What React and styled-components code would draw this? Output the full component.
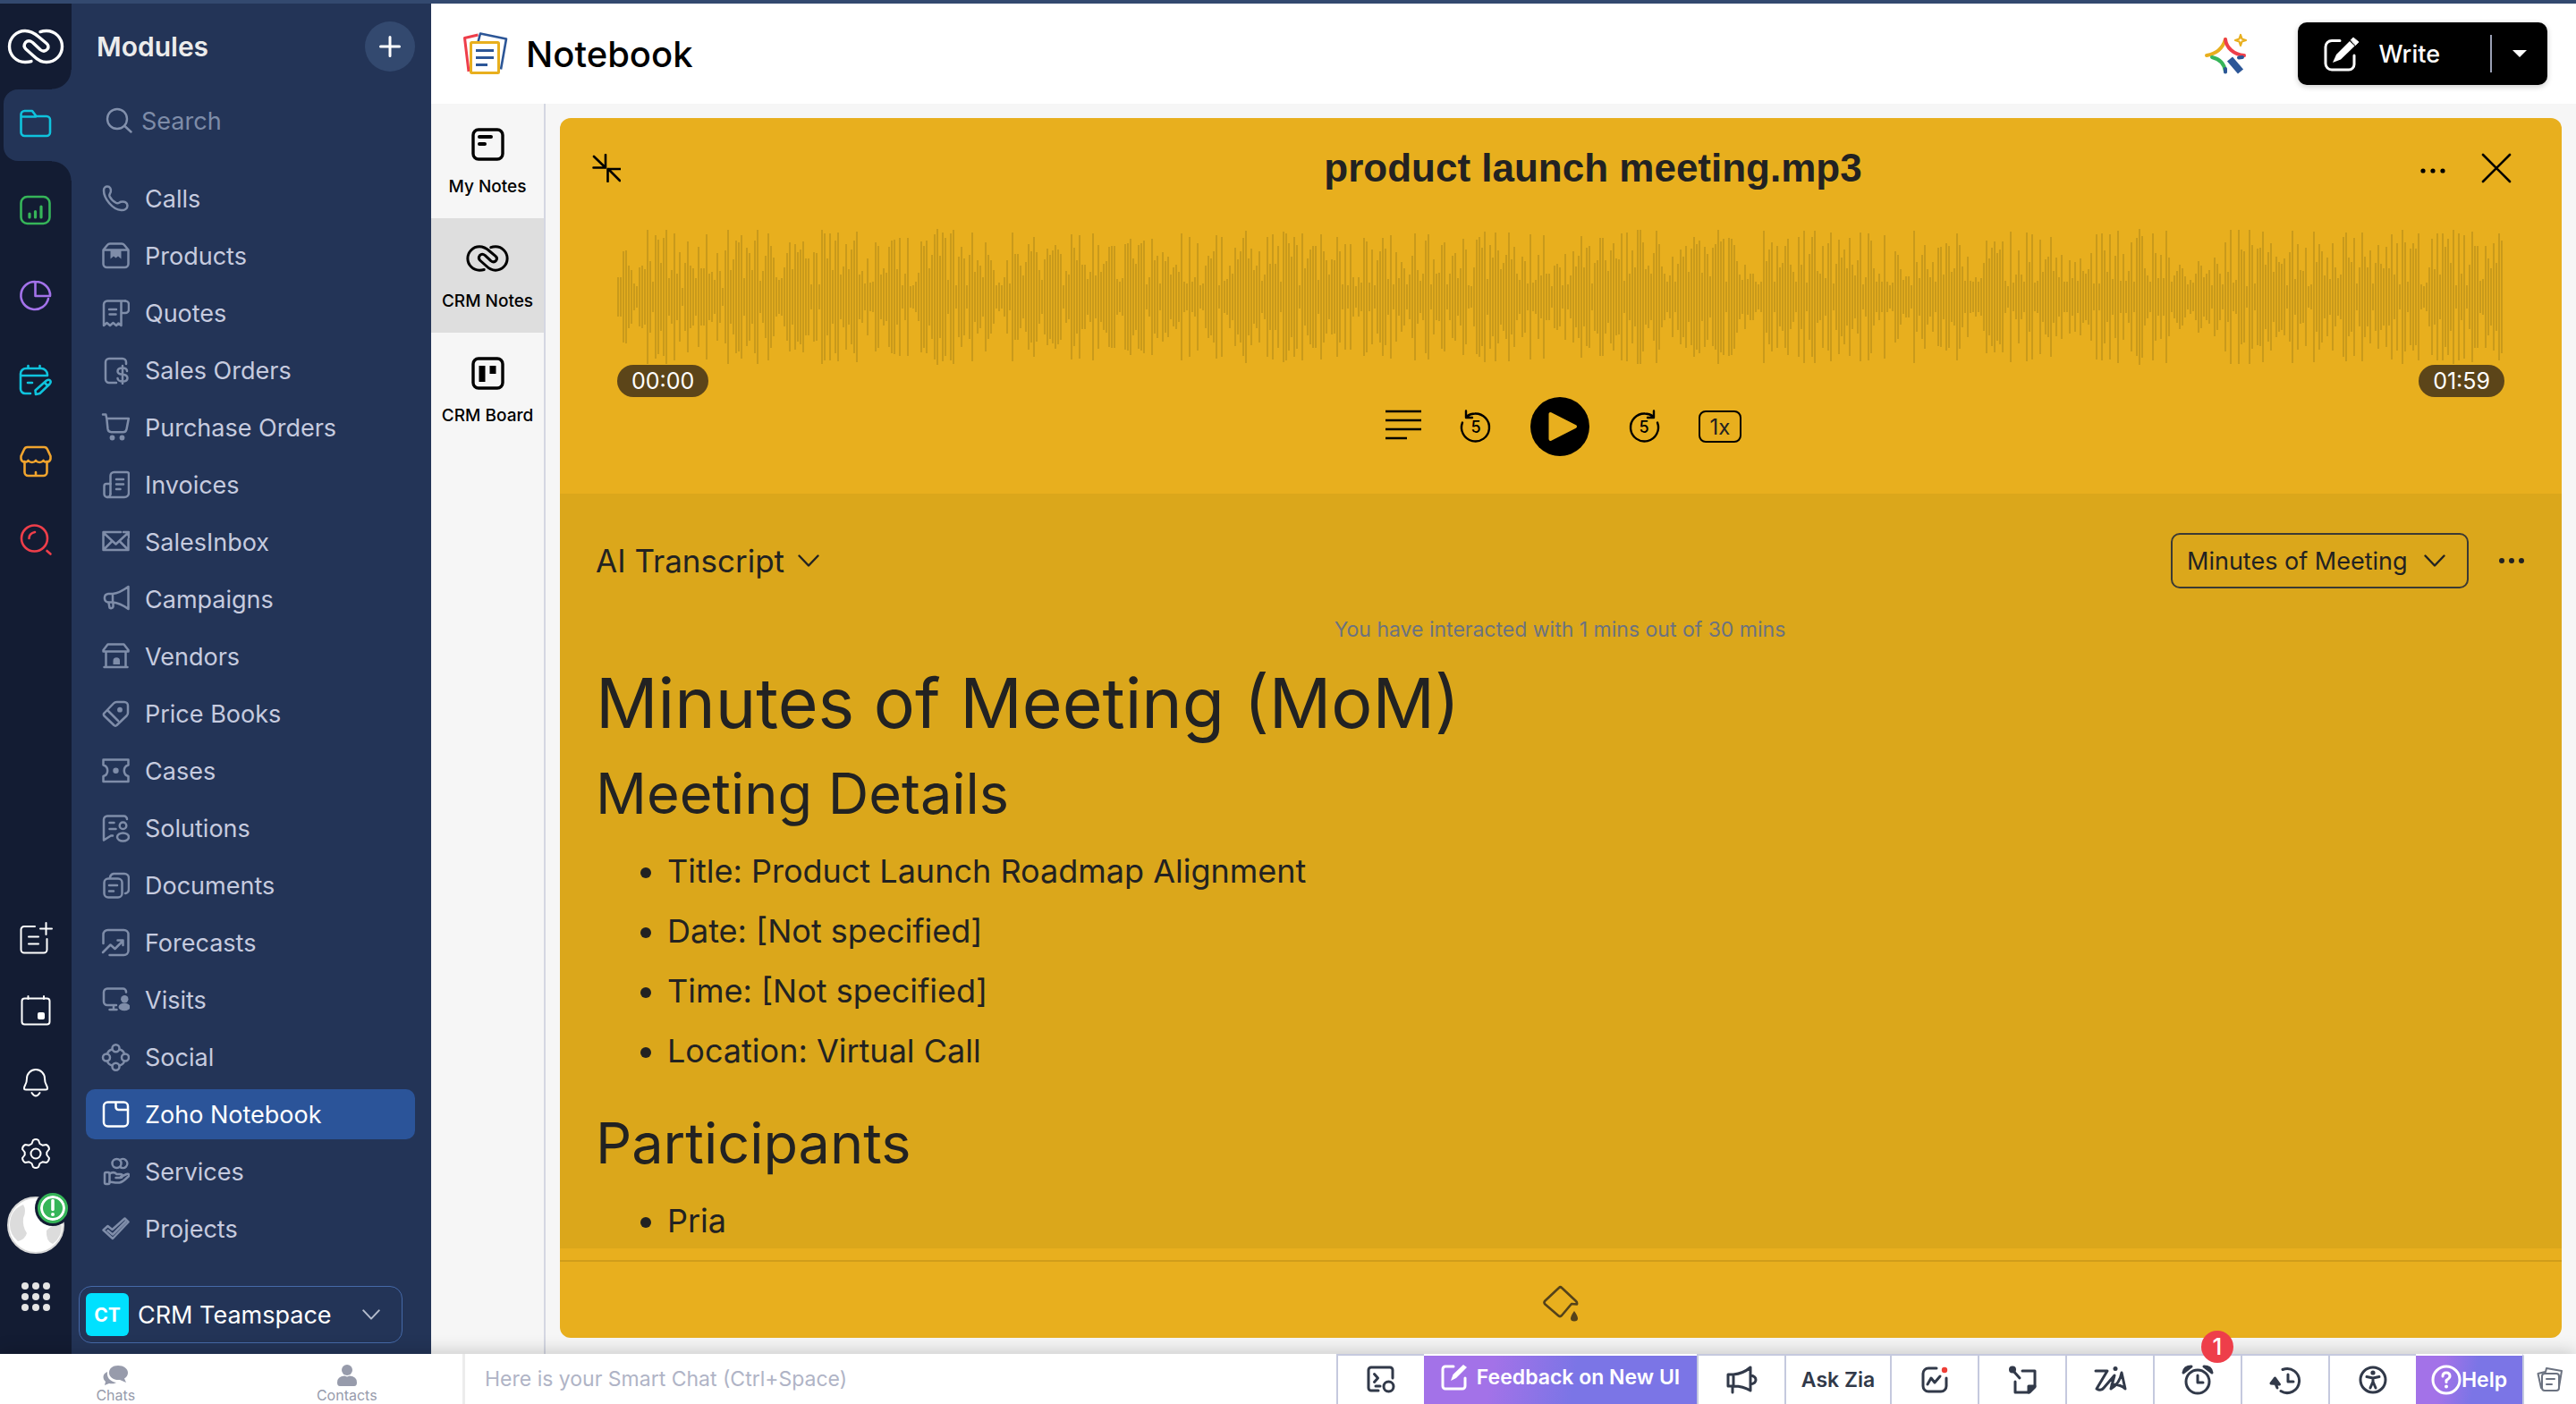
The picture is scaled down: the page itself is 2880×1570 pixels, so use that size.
import React from "react";
import styled, { createGlobalStyle } from "styled-components";

/* ---------- icons ---------- */

const Icon = ({ size = 32, box = size, stroke = 2.5, children, ...rest }) => (
  <svg
    width={size}
    height={size}
    viewBox={`0 0 ${box} ${box}`}
    fill="none"
    stroke="currentColor"
    strokeWidth={stroke}
    strokeLinecap="round"
    strokeLinejoin="round"
    aria-hidden="true"
    {...rest}
  >
    {children}
  </svg>
);

const Dot = (props) => <circle fill="currentColor" stroke="none" {...props} />;

const LinkLogo = ({ width = 64, height = 44, stroke = 3.4 }) => (
  <svg
    width={width}
    height={height}
    viewBox="0 0 64 44"
    fill="none"
    stroke="currentColor"
    strokeWidth={stroke}
    strokeLinecap="round"
    strokeLinejoin="round"
    aria-hidden="true"
  >
    <path d="M27 38.6Q24 39.5 20 39.500A17.500 17.500 0 0 1 20 4.500C27 4.500 31 7.500 35 11L44 18.500Q47.500 21.500 45 25Q41.500 29 37 25.500L28.500 17.500Q24 14 20.500 17.500Q17.500 21.500 21 25L30 33C34 37 38 39.500 44 39.500A17.500 17.500 0 0 0 44 4.500Q40 4.500 37 5.600" />
  </svg>
);

const Chevron = ({ width = 24, stroke = 2.4 }) => (
  <svg
    width={width}
    height={width}
    viewBox="0 0 24 24"
    fill="none"
    stroke="currentColor"
    strokeWidth={stroke}
    strokeLinecap="round"
    strokeLinejoin="round"
    aria-hidden="true"
  >
    <path d="M1.500 6.500L12 17.500L22.500 6.500" />
  </svg>
);

const moduleIcons = {
  calls: (
    <path d="M3 7c0-3 2-4.500 4-4.500 3 0 4.500 3 3.800 6-.5 2-2.300 3-1.300 5 1.500 3 4.500 6 7.500 7.500 2 1 3.300-.6 5-1.200 4-1.200 7.500.8 7.500 4.200 0 3.500-3.500 5.300-7 5C13 28.500 3 16 3 7z" />
  ),
  products: (
    <>
      <path d="M2.500 9.500v15.500a4 4 0 0 0 4 4h20a4 4 0 0 0 4-4V9.500l-4.500-5.500a4 4 0 0 0-3-1.500H10a4 4 0 0 0-3 1.500z M3 9.500h27" />
      <path d="M10.500 10h12v9.500l-3.500-3-2.500 2-2.500-2-3.500 3z" fill="currentColor" stroke="none" />
    </>
  ),
  quotes: (
    <>
      <path d="M27 2.500H7a4 4 0 0 0-4 4V30l3.500-3 3.500 3 3.500-3 3.500 3 2.500-2.500 3 2.500V2.500" />
      <path d="M23 16h4a4 4 0 0 0 4-4V6.500a4 4 0 0 0-4-4M9 12h8M9.500 17.500h7" />
    </>
  ),
  salesOrders: (
    <>
      <path d="M28 9V7a4 4 0 0 0-4-4H9a4 4 0 0 0-4 4v19a4 4 0 0 0 4 4h8" />
      <path d="M29 17c0-2-2-3.500-5-3.500s-5.500 1-5.500 3.700 2.500 3.300 5.500 3.600 5.500 1.200 5.500 3.900-2.500 3.800-5.500 3.800-5.500-1.500-5.500-3.500M24 11v20" />
    </>
  ),
  cart: (
    <>
      <path d="M2 1.500h3.300l1 4.500h24.500l-2.300 12a4 4 0 0 1-4 3.200H11.500a4 4 0 0 1-4-3.500L6.300 6" />
      <Dot cx="12.500" cy="27.500" r="2.900" />
      <Dot cx="23.500" cy="27.500" r="2.900" />
    </>
  ),
  invoices: (
    <>
      <path d="M10.500 26V6a4 4 0 0 1 4-4H29a2 2 0 0 1 2 2v21a5 5 0 0 1-5 5H7" />
      <path d="M10.500 15H6a2.500 2.500 0 0 0-2.500 2.500v9a3.500 3.500 0 0 0 7 0M17 10h8M17 15.500h8M17 21h4.500" />
    </>
  ),
  inbox: (
    <path d="M22 5H2.500v20h28V13M3 6l13.500 12.500L29.500 6.500M25 5h6v6M3.500 24l8.500-8.500M29.500 24L21 15.500" />
  ),
  campaigns: (
    <>
      <path d="M13 10C19 9.500 25 6 30.500 2v25C25 23 19 20 13 19.500zM13 10H8a4.800 4.800 0 0 0 0 9.500h5" />
      <path d="M8.500 20l1 5.500a2.500 2.500 0 0 0 4-1V20" />
    </>
  ),
  vendors: (
    <>
      <path d="M7.500 2.500h18L30.500 9v1.500h-28V9zM5.500 10.500V28h22V10.500M3.500 28h26" />
      <path d="M13.500 25v-4a3.500 3.500 0 0 1 7.500 0v4z" fill="currentColor" stroke="none" />
    </>
  ),
  priceBooks: (
    <>
      <path d="M3.500 15.500L14 4.500A5 5 0 0 1 17.500 3H26a4 4 0 0 1 4 4v8a5 5 0 0 1-1.500 3.500L17.500 29a2 2 0 0 1-3 0L3.500 18.500a2 2 0 0 1 0-3zM8 13l11 11" />
      <Dot cx="21" cy="11.700" r="2.900" />
    </>
  ),
  cases: (
    <>
      <path d="M2.500 3.500h28v6a6.500 6.500 0 0 0 0 12.500v6h-28v-6a6.500 6.500 0 0 0 0-12.500z" />
      <Dot cx="16.500" cy="15.700" r="3.200" />
    </>
  ),
  solutions: (
    <>
      <path d="M29 6a3.500 3.500 0 0 0-3.500-3.500H7a4 4 0 0 0-4 4v23L11 24.500h2M9.500 10h5M9.500 17h7" />
      <circle cx="24.500" cy="13.300" r="3.800" />
      <ellipse cx="24.500" cy="26" rx="6.500" ry="4.500" />
    </>
  ),
  documents: (
    <>
      <path d="M10 7a5 5 0 0 1 4-4h12a5 5 0 0 1 5 5v12a5 5 0 0 1-4 5" />
      <rect x="3.500" y="8.500" width="20" height="21" rx="4.500" />
      <path d="M9 16h9M9 22.500h5" />
    </>
  ),
  forecasts: (
    <path d="M2.500 17V7a5 5 0 0 1 5-5h18a5 5 0 0 1 5 5v18a5 5 0 0 1-5 5h-16M2 27l8.500-8.500 5 4.500 8.500-8.500M18.500 13.500h6v5.500" />
  ),
  visits: (
    <>
      <path d="M28 7.500v-.5a3.500 3.500 0 0 0-3.500-3.500H7a4 4 0 0 0-4 4V18a4 4 0 0 0 4 4h10M14 22v5M9.500 27h8" />
      <Dot cx="26.300" cy="15.300" r="4.200" />
      <ellipse cx="26" cy="24" rx="6.500" ry="4.300" fill="currentColor" stroke="none" />
    </>
  ),
  social: (
    <>
      <circle cx="16.500" cy="6.300" r="4" />
      <circle cx="6" cy="16.500" r="4" />
      <circle cx="27" cy="16.500" r="4" />
      <circle cx="16.500" cy="26.700" r="4" />
      <path d="M12.500 7.500Q8 8.500 7 12.500M20.500 7.500Q25 8.500 26 12.500M7 20.500Q8 24.500 12.500 25.500M26 20.500Q25 24.500 20.500 25.500" />
    </>
  ),
  notebook: (
    <>
      <rect x="3" y="2.500" width="27" height="27" rx="4.500" />
      <path d="M16.500 3v5a3 3 0 0 0 3 3H30" />
    </>
  ),
  services: (
    <>
      <circle cx="17.500" cy="7" r="5" />
      <path d="M21 3.300a5 5 0 1 1 0 7.500" />
      <rect x="4" y="17" width="5.500" height="13" rx="1.500" />
      <path d="M9.500 18.500c3-2 6-1.500 8 .5h4c3 0 3 4 0 4h-5M22 22l6.500-3c3-.8 3.500 1.500 1.500 3-3 3-6 6-9.500 6.500-4 .5-7-.5-11-1" />
    </>
  ),
  projects: (
    <>
      <path d="M2.500 17.500l5-4.500 5 4L26.500 4.500l4 4L13 27z" />
      <path d="M7.500 18l5.500 4.500L27.500 8" />
    </>
  ),
};

const NotebookLogo = () => (
  <Icon size={52} stroke={3} strokeLinecap="butt">
    <path d="M8 46L3.500 8.500l15-3.500" stroke="#ee3e4a" />
    <path d="M18.500 13L21 3.500 50 9.500 44 43.500" stroke="#2c5697" strokeWidth="2.600" />
    <rect x="10.500" y="13.500" width="31" height="34" rx="1" stroke="#e8af1e" fill="#fff" />
    <path d="M16 22.500h20M16 30.500h20M16 38.500h13" stroke="#2c5697" />
  </Icon>
);

const SparkleLogo = () => (
  <Icon size={52} stroke={4}>
    <path d="M4 28C16 26 22 20 25 10" stroke="#e8af1e" />
    <path d="M25 10c1 9 9 17 21 18" stroke="#ee3e4a" />
    <path d="M10 30c9 2 14 8 15 16" stroke="#36b559" />
    <path d="M25 43v3.500M44 30l-4 .5" stroke="#2c5697" />
    <path d="M30 32L42 46" stroke="#2c5697" strokeWidth="8" strokeLinecap="butt" />
    <path
      d="M42 5l1.500 4.500 4.500 1.500-4.500 1.500-1.500 4.500-1.500-4.500-4.500-1.500 4.500-1.500z"
      stroke="#e8af1e"
      strokeWidth="2.200"
    />
  </Icon>
);

const Seek = ({ flip }) => (
  <Icon size={40} stroke={2.400}>
    <g transform={flip ? "translate(40 0) scale(-1 1)" : undefined}>
      <path d="M5 15.500A15.500 15.500 0 1 0 19 5.500q-5 0-9 3M9 2.500v7.500h7" />
    </g>
    <text
      x="20"
      y="27"
      textAnchor="middle"
      fill="currentColor"
      stroke="none"
      fontSize="18"
      fontWeight="500"
    >
      5
    </text>
  </Icon>
);

/* ---------- data ---------- */

const railTop = [
  {
    label: "Modules",
    color: "#0fc3dd",
    size: 80,
    active: true,
    icon: (
      <path d="M2.500 27V7a4 4 0 0 1 4-4H15l4.500 6H31a4 4 0 0 1 4 4v14a4 4 0 0 1-4 4H6.500a4 4 0 0 1-4-4M2.500 9.500H19" />
    ),
  },
  {
    label: "Reports",
    color: "#36b559",
    size: 96,
    icon: (
      <>
        <rect x="2.500" y="3" width="32" height="30" rx="7" />
        <path d="M12 22v4M18.500 19.500v6.500M25 14v12" strokeWidth="3.200" />
      </>
    ),
  },
  {
    label: "Analytics",
    color: "#a372ea",
    size: 96,
    icon: <path d="M18.500 3v15h16.500A16.500 15 0 0 0 18.500 2A15.500 15.500 0 1 0 33 21" />,
  },
  {
    label: "Requests",
    color: "#0fc3dd",
    size: 92,
    icon: (
      <path d="M13 33H7a5 5 0 0 1-5-5V11a6 6 0 0 1 6-6h17a7 7 0 0 1 7 7v1H3M10.500 2v3M23.500 2v3M10 21h5M19 34l-.5-4.500L31 18.500q2.500-1.500 4 0t-.5 4L23.500 33zM29 21l3 3" />
    ),
  },
  {
    label: "Marketplace",
    color: "#f0a42e",
    size: 88,
    icon: (
      <path d="M6.500 19v12a4 4 0 0 0 4 4h17a4 4 0 0 0 4-4V19M2.500 13L6 5.500a4 4 0 0 1 4-2.500h18a4 4 0 0 1 4 2.500l3.500 7.500v3a4.500 4.500 0 0 1-8 2 5.500 5.500 0 0 1-8.500 0 5.500 5.500 0 0 1-8.500 0 4.500 4.500 0 0 1-8-2zM19 31v4" />
    ),
  },
  {
    label: "Zia Search",
    color: "#ee3e4a",
    size: 88,
    icon: <path d="M17.500 2.500a14.500 14.500 0 1 1 0 29 14.500 14.500 0 1 1 0-29zM11.500 17q0-5.500 6.500-7M31.500 31l4 3.500" />,
  },
];

const railBottom = [
  {
    label: "Quick create",
    icon: <path d="M18 5H6a3.500 3.500 0 0 0-3.500 3.500V31A3.500 3.500 0 0 0 6 34.500h22a3.500 3.500 0 0 0 3.500-3.500V19M11 16.500h11M11 24.500h11M30.500 1v13M24 7.500h13" />,
  },
  {
    label: "Calendar",
    icon: (
      <>
        <rect x="3.500" y="5.500" width="31" height="29" rx="3" />
        <path d="M10.500 3v3M28 3v3" />
        <rect x="21" y="21" width="8" height="8" rx="2" fill="currentColor" stroke="none" />
      </>
    ),
  },
  {
    label: "Notifications",
    icon: <path d="M9 15a10 10 0 0 1 20 0c0 7 3 7 3 11q0 1.500-2 1.500H8Q6 27.500 6 26c0-4 3-4 3-11zM14.500 31q4.500 7 9 0" />,
  },
  {
    label: "Setup",
    icon: (
      <>
        <path d="M16 4q3-2 6 0l1.500 4 3 1.700 4.200-.7q3 1.300 3.300 5l-2.700 3.500v3l2.700 3.500q-.3 3.700-3.300 5l-4.200-.7-3 1.700L22 34q-3 2-6 0l-1.500-4-3-1.700-4.200.7q-3-1.300-3.300-5L6.700 20.500v-3L4 14q.3-3.700 3.300-5l4.200.7 3-1.700z" />
        <circle cx="19" cy="19" r="5.500" />
      </>
    ),
  },
];

const modules = [
  ["Calls", "calls"],
  ["Products", "products"],
  ["Quotes", "quotes"],
  ["Sales Orders", "salesOrders"],
  ["Purchase Orders", "cart"],
  ["Invoices", "invoices"],
  ["SalesInbox", "inbox"],
  ["Campaigns", "campaigns"],
  ["Vendors", "vendors"],
  ["Price Books", "priceBooks"],
  ["Cases", "cases"],
  ["Solutions", "solutions"],
  ["Documents", "documents"],
  ["Forecasts", "forecasts"],
  ["Visits", "visits"],
  ["Social", "social"],
  ["Zoho Notebook", "notebook"],
  ["Services", "services"],
  ["Projects", "projects"],
];

const details = [
  "Title: Product Launch Roadmap Alignment",
  "Date: [Not specified]",
  "Time: [Not specified]",
  "Location: Virtual Call",
];

const opening = [
  22, 22, 51, 52, 35, 30, 15, 12, 33, 35, 31, 75, 40, 17, 69, 64, 38, 66, 75, 21, 30, 71, 26, 50,
  10, 38, 62, 35, 32, 21, 56, 32, 32, 70, 26, 28, 19, 49, 29, 10, 52, 75, 30, 42, 63, 61, 69, 21,
  55, 49, 30, 63, 75, 18, 29, 46, 71, 57, 44, 22, 19, 21, 33, 49, 61, 31, 59, 50, 53, 62, 43, 43,
];

// small seeded generator, so the wave form is the same on every render
const makeWave = (count) => {
  let seed = 7919;
  const next = () => {
    seed = (seed * 16807) % 2147483647;
    return seed / 2147483647;
  };
  const bars = [...opening];
  while (bars.length < count) {
    bars.push(Math.round(12 + Math.pow(next(), 1.2) * 64));
  }
  return bars;
};

const wavePath = makeWave(703)
  .map((h, i) => `M${i * 3 + 1} ${76 - h}V${76 + h}`)
  .join("");

/* ---------- page ---------- */

const App = () => {
  return (
    <Page>
      <GlobalStyle />
      <TopStrip />
      <Body>
        <Rail>
          <LogoLink href="#home" aria-label="Home">
            <LinkLogo />
          </LogoLink>
          <RailTop>
            {railTop.map((item) => (
              <RailItem
                key={item.label}
                href="#rail"
                aria-label={item.label}
                $size={item.size}
                $color={item.color}
                $active={item.active}
              >
                <Icon size={38} stroke={2.600}>{item.icon}</Icon>
              </RailItem>
            ))}
          </RailTop>
          <RailBottom>
            {railBottom.map((item) => (
              <RailItem key={item.label} href="#rail" aria-label={item.label} $size={80} $color="#fff">
                <Icon size={38} stroke={2}>{item.icon}</Icon>
              </RailItem>
            ))}
            <RailItem href="#profile" aria-label="Profile" $size={80} $color="#fff">
              <Avatar>
                <svg width="64" height="64" viewBox="0 0 64 64" aria-hidden="true">
                  <circle cx="32" cy="32" r="31" fill="#fff" stroke="#d8d8d8" strokeWidth="2" />
                  <path d="M3 32Q3 15 18 9Q22 16 18 24Q17 34 22 41Q20 48 12 50Q3 42 3 32zM44 38Q52 30 61 32Q61 46 51 53Q43 50 44 38z" fill="#dcdcdc" />
                </svg>
                <AvatarBadge>
                  <svg width="28" height="28" viewBox="0 0 28 28" aria-hidden="true">
                    <path d="M14 5.500v10" stroke="#fff" strokeWidth="3.600" strokeLinecap="round" />
                    <circle cx="14" cy="21" r="2" fill="#fff" />
                  </svg>
                </AvatarBadge>
              </Avatar>
            </RailItem>
            <RailItem href="#apps" aria-label="All apps" $size={80} $color="#e4e4e4">
              <Icon size={38}>
                {[7, 19, 31].map((y) => [7, 19, 31].map((x) => <Dot key={`${x}-${y}`} cx={x} cy={y} r="4" />))}
              </Icon>
            </RailItem>
          </RailBottom>
        </Rail>

        <Sidebar>
          <SidebarHeader>
            <SidebarTitle>Modules</SidebarTitle>
            <AddButton aria-label="Add module">
              <Icon size={24} stroke={3}>
                <path d="M12 1.500v21M1.500 12h21" />
              </Icon>
            </AddButton>
          </SidebarHeader>
          <SearchBox>
            <Icon size={30} stroke={2.400}>
              <circle cx="13" cy="13" r="11" />
              <path d="M21.500 21l7 6.500" />
            </Icon>
            <input type="search" placeholder="Search" aria-label="Search modules" />
          </SearchBox>
          <ModuleList>
            {modules.map(([label, icon]) => (
              <ModuleLink key={label} href="#module" $active={label === "Zoho Notebook"}>
                <Icon>{moduleIcons[icon]}</Icon>
                {label}
              </ModuleLink>
            ))}
          </ModuleList>
          <Teamspace>
            <TeamBadge>CT</TeamBadge>
            <select aria-label="Teamspace">
              <option>CRM Teamspace</option>
            </select>
            <Chevron width={20} />
          </Teamspace>
        </Sidebar>

        <Main>
          <Header>
            <NotebookLogo />
            <HeaderTitle>Notebook</HeaderTitle>
            <IconButton aria-label="Zia">
              <SparkleLogo />
            </IconButton>
            <WriteGroup>
              <WriteButton>
                <Icon size={42} stroke={3}>
                  <path d="M19 6.500H10a7 7 0 0 0-7 7V32a7 7 0 0 0 7 7h19a6 6 0 0 0 6-6V23" />
                  <path d="M11 31l4-9L30 7l5.500 5.500L20 27.500z" fill="currentColor" stroke="none" />
                  <path d="M31.500 5.500L34 3l6 5-3.500 3.500z" fill="currentColor" strokeWidth="1" />
                </Icon>
                Write
              </WriteButton>
              <WriteMore aria-label="More write options">
                <svg width="16" height="8" viewBox="0 0 16 8" aria-hidden="true">
                  <path d="M0 0h16L8 8z" fill="#fff" />
                </svg>
              </WriteMore>
            </WriteGroup>
          </Header>

          <Workspace>
            <Tabs>
              <TabLink href="#my-notes">
                <Icon size={48} stroke={3.400}>
                  <rect x="8" y="8" width="33" height="33" rx="6" />
                  <path d="M15 16h13M15 24h6" strokeWidth="4" />
                </Icon>
                My Notes
              </TabLink>
              <TabLink href="#crm-notes" $active>
                <LinkLogo width={48} height={48} stroke={4} />
                CRM Notes
              </TabLink>
              <TabLink href="#crm-board">
                <Icon size={48} stroke={3.400}>
                  <rect x="8" y="8" width="33" height="33" rx="6" />
                  <path d="M18 16v18" strokeWidth="7" strokeLinecap="butt" />
                  <path d="M30 16v9" strokeWidth="7" strokeLinecap="butt" />
                </Icon>
                CRM Board
              </TabLink>
            </Tabs>

            <Card>
              <Player>
                <PlayerHeader>
                  <CollapseButton aria-label="Collapse">
                    <Icon size={32} stroke={2.600}>
                      <path d="M2 3l13 12.500M15 1v14.500H1.500M31 30L18 17M31.500 17H17.500V31" />
                    </Icon>
                  </CollapseButton>
                  <FileName>product launch meeting.mp3</FileName>
                  <PlayerActions>
                    <IconButton aria-label="More">
                      <Icon size={28}>
                        <Dot cx="3" cy="17" r="2.600" />
                        <Dot cx="14" cy="17" r="2.600" />
                        <Dot cx="25" cy="17" r="2.600" />
                      </Icon>
                    </IconButton>
                    <IconButton aria-label="Close">
                      <Icon size={34} stroke={2.600}>
                        <path d="M2 2l30 30M32 2L2 32" />
                      </Icon>
                    </IconButton>
                  </PlayerActions>
                </PlayerHeader>
                <Wave viewBox="0 0 2110 152" preserveAspectRatio="none" aria-hidden="true">
                  <path d={wavePath} stroke="#c99a1b" strokeWidth="2" />
                </Wave>
                <Times>
                  <TimePill>00:00</TimePill>
                  <TimePill>01:59</TimePill>
                </Times>
                <Controls>
                  <IconButton aria-label="Transcript">
                    <Icon size={40} stroke={2.400} strokeLinecap="butt">
                      <path d="M0 3h40M0 13h40M0 23h40M0 33h24" />
                    </Icon>
                  </IconButton>
                  <IconButton aria-label="Back 5 seconds">
                    <Seek />
                  </IconButton>
                  <PlayButton aria-label="Play">
                    <Icon size={66} stroke={4}>
                      <path d="M22.500 19v28L50 33z" fill="currentColor" />
                    </Icon>
                  </PlayButton>
                  <IconButton aria-label="Forward 5 seconds">
                    <Seek flip />
                  </IconButton>
                  <SpeedButton aria-label="Playback speed">1x</SpeedButton>
                </Controls>
              </Player>

              <Transcript>
                <TranscriptBar>
                  <PlainSelect>
                    <select aria-label="View">
                      <option>AI Transcript</option>
                    </select>
                    <Chevron />
                  </PlainSelect>
                  <OutlinedSelect>
                    <select aria-label="Document type">
                      <option>Minutes of Meeting</option>
                    </select>
                    <Chevron />
                  </OutlinedSelect>
                  <IconButton aria-label="Transcript options">
                    <Icon size={28}>
                      <Dot cx="3" cy="14" r="3" />
                      <Dot cx="14" cy="14" r="3" />
                      <Dot cx="25" cy="14" r="3" />
                    </Icon>
                  </IconButton>
                </TranscriptBar>
                <Usage>You have interacted with 1 mins out of 30 mins</Usage>
                <DocTitle>Minutes of Meeting (MoM)</DocTitle>
                <DocHeading>Meeting Details</DocHeading>
                <DocList>
                  {details.map((line) => (
                    <li key={line}>{line}</li>
                  ))}
                </DocList>
                <DocHeading>Participants</DocHeading>
                <DocList>
                  <li>Pria</li>
                </DocList>
              </Transcript>

              <CardFooter>
                <IconButton aria-label="Note colour">
                  <Icon size={44} stroke={2.600}>
                    <path d="M20 3q1.500-1.500 3 0l16 15q1.500 1.500 1 3.500l-6-.5L23 34q-2 2-4 0L4.500 21.500q-2-2 0-4z" />
                    <path d="M37 29q8 11 0 11.500-8-.5 0-11.500z" fill="currentColor" stroke="none" />
                  </Icon>
                </IconButton>
              </CardFooter>
            </Card>
          </Workspace>
        </Main>
      </Body>

      <BottomBar>
        <ChatTabs>
          <ChatLink href="#chats">
            <svg width="30" height="24" viewBox="0 0 30 24" fill="#979bab" aria-hidden="true">
              <path d="M18 1c6 0 11 3.500 11 8 0 3-1.500 5-4 6.500l2 4.500-7-3c-7 .5-12-3-12-8s4-8 10-8z" />
              <path d="M6 8c-1 6 3 11 10 12-2 1.500-5 1.500-8 1l-5 2 1-4c-4-4-3-9 2-11z" />
            </svg>
            Chats
          </ChatLink>
          <ChatLink href="#contacts">
            <svg width="24" height="24" viewBox="0 0 24 24" fill="#979bab" aria-hidden="true">
              <circle cx="12" cy="6" r="6" />
              <path d="M1 20q0-7 8-7.500l3 1 3-1q8 .5 8 7.500 0 4-3 4H4q-3 0-3-4z" />
            </svg>
            Contacts
          </ChatLink>
        </ChatTabs>
        <ChatInput type="text" placeholder="Here is your Smart Chat (Ctrl+Space)" aria-label="Smart Chat" />
        <Tools>
          <Tool aria-label="Console">
            <Icon stroke={3}>
              <path d="M13 28H5a3 3 0 0 1-3-3V5a3 3 0 0 1 3-3h21a3 3 0 0 1 3 3v9M8.500 9.500l4 4.500-4 4.500M10 23h5" />
              <circle cx="24.500" cy="23.500" r="5.500" />
            </Icon>
          </Tool>
          <GradientTool $wide>
            <Icon size={30} stroke={3}>
              <path d="M14 3H5a3 3 0 0 0-3 3v19a3 3 0 0 0 3 3h19a3 3 0 0 0 3-3V16" />
              <path d="M11 19l2.500-7L25 1l4 3L17 16z" fill="currentColor" stroke="none" />
            </Icon>
            Feedback on New UI
          </GradientTool>
          <Tool aria-label="Announcements">
            <Icon size={36} stroke={3}>
              <path d="M3 12h6v13H3zM9 12q11-1 19-8v26q-8-5-19-5M8 25v7M28 13q6 1 6 5t-6 5" />
            </Icon>
          </Tool>
          <Tool $text>Ask Zia</Tool>
          <Tool aria-label="Insights">
            <Icon stroke={3}>
              <path d="M18 3H9a6 6 0 0 0-6 6v14a6 6 0 0 0 6 6h14a6 6 0 0 0 6-6V14M8 21l4-7 4 5 6-7" />
              <circle cx="27" cy="5" r="3.200" fill="#ee3e36" stroke="none" />
            </Icon>
          </Tool>
          <Tool aria-label="Sticky notes">
            <Icon stroke={3}>
              <path d="M16 6h14v18l-6 6H8V18M5 5l8 9" />
              <Dot cx="5" cy="4.500" r="4" />
              <path d="M30 23l-7 7v-7z" fill="currentColor" />
            </Icon>
          </Tool>
          <Tool aria-label="Zia">
            <Icon size={38} stroke={3}>
              <path d="M3 9h13L4 29q5 3 8-1L24 14l-4 15M20 29q10-6 12-18l4 18q-5-5-15-5" />
              <Dot cx="25" cy="6.500" r="2.500" />
            </Icon>
          </Tool>
          <Tool aria-label="Reminders">
            <Icon size={36} stroke={3}>
              <circle cx="18" cy="20" r="13" />
              <path d="M18 13v8h6" />
              <path d="M2 10q1-7 9-7zM34 10q-1-7-9-7z" fill="currentColor" />
            </Icon>
            <Count>1</Count>
          </Tool>
          <Tool aria-label="Recent items">
            <Icon size={36} stroke={3}>
              <path d="M15 6.500a13.500 13.500 0 1 1-2 24M21 12v8h6" />
              <path d="M2 22l4.500-6 5 7zM7 19q0 5 2 8" fill="currentColor" />
            </Icon>
          </Tool>
          <Tool aria-label="Accessibility">
            <Icon size={36} stroke={3}>
              <circle cx="18" cy="18" r="14" />
              <Dot cx="18" cy="10" r="2.600" />
              <path d="M11 14.500l7 1.500 7-1.500M18 16v5M18 20l-3 7M18 20l3 7" />
            </Icon>
          </Tool>
          <GradientTool>
            <Icon size={34} stroke={3}>
              <circle cx="17" cy="17" r="15" />
              <path d="M13 13q0-4 4-4t4 4q0 2-4 4.500v2" />
              <Dot cx="17" cy="24.500" r="2" />
            </Icon>
            Help
          </GradientTool>
          <NotesTool aria-label="Notes">
            <Icon size={30} stroke={2}>
              <path d="M5 24L1.500 8l8-2M10 6l1-4 17 3-3 18" />
              <rect x="6" y="8" width="19" height="19" rx="3" />
              <path d="M11 14h9M11 20h6" />
            </Icon>
          </NotesTool>
        </Tools>
      </BottomBar>
    </Page>
  );
};

const GlobalStyle = createGlobalStyle`
  * {
    box-sizing: border-box;
  }

  body {
    margin: 0;
    background: #f6f6f6;
  }

  body, button, input, select {
    font-family: Inter, "Liberation Sans", sans-serif;
  }

  button, input, select {
    margin: 0;
    padding: 0;
    border: none;
    background: none;
    color: inherit;
    font-size: inherit;
    outline: none;
  }

  button, select {
    cursor: pointer;
  }

  select {
    appearance: none;
  }

  a {
    color: inherit;
    text-decoration: none;
  }

  svg {
    display: block;
    flex-shrink: 0;
  }
`;

const Page = styled.div`
  display: grid;
  grid-template-rows: auto minmax(0, 1fr) auto;
  height: 100vh;
`;

const TopStrip = styled.div`
  height: 4px;
  background: #33496f;
`;

const Body = styled.div`
  display: flex;
  min-height: 0;
`;

const Rail = styled.nav`
  display: flex;
  flex-direction: column;
  width: 80px;
  padding: 26px 0 24px;
  background: #131c33;
`;

const LogoLink = styled.a`
  display: flex;
  justify-content: center;
  color: #fff;
`;

const RailTop = styled.div`
  margin-top: 26px;
`;

const RailBottom = styled.div`
  margin-top: auto;
`;

const RailItem = styled.a`
  position: relative;
  display: flex;
  align-items: center;
  justify-content: center;
  height: ${(props) => props.$size}px;
  color: ${(props) => props.$color};

  ${(props) =>
    props.$active &&
    `
    margin: 0 0 8px 4px;
    padding-right: 4px;
    background: #233457;
    border-radius: 16px 0 0 16px;

    &::before, &::after {
      content: "";
      position: absolute;
      right: 0;
      width: 22px;
      height: 22px;
    }

    &::before {
      bottom: 100%;
      background: radial-gradient(circle at 0 0, #131c33 21px, #233457 22px);
    }

    &::after {
      top: 100%;
      background: radial-gradient(circle at 0 100%, #131c33 21px, #233457 22px);
    }
  `}
`;

const Avatar = styled.div`
  position: relative;
`;

const AvatarBadge = styled.span`
  position: absolute;
  top: -4px;
  right: -4px;
  display: flex;
  align-items: center;
  justify-content: center;
  width: 34px;
  height: 34px;
  border: 3px solid #36b559;
  border-radius: 50%;
  background: #36b559;
  box-shadow: inset 0 0 0 3px #fff, 0 0 0 3px #131c33;
`;

const Sidebar = styled.aside`
  display: flex;
  flex-direction: column;
  width: 402px;
  padding: 0 18px 12px 16px;
  background: #233457;
`;

const SidebarHeader = styled.div`
  display: flex;
  align-items: center;
  justify-content: space-between;
  height: 96px;
  padding-left: 12px;
`;

const SidebarTitle = styled.h2`
  margin: 0;
  color: #ececec;
  font-size: 30px;
  font-weight: 600;
`;

const AddButton = styled.button`
  display: flex;
  align-items: center;
  justify-content: center;
  width: 56px;
  height: 56px;
  border-radius: 50%;
  background: #33496f;
  color: #fff;
`;

const SearchBox = styled.label`
  display: flex;
  align-items: center;
  gap: 10px;
  height: 70px;
  padding-left: 22px;
  color: #8290ac;
  font-size: 27px;

  input {
    flex: 1;
    min-width: 0;
  }

  input::placeholder {
    color: #7e8ca8;
  }
`;

const ModuleList = styled.nav`
  display: flex;
  flex-direction: column;
  gap: 8px;
  margin-top: 24px;
`;

const ModuleLink = styled.a`
  display: flex;
  align-items: center;
  gap: 17px;
  height: 56px;
  padding-left: 17px;
  border-radius: 10px;
  background: ${(props) => (props.$active ? "#2b5499" : "transparent")};
  color: ${(props) => (props.$active ? "#fff" : "#c6cbdf")};
  font-size: 27px;

  svg {
    color: ${(props) => (props.$active ? "#fff" : "#7f8da9")};
  }
`;

const Teamspace = styled.div`
  display: flex;
  align-items: center;
  height: 64px;
  margin: auto 14px 0 -8px;
  padding: 0 24px 0 7px;
  border: 1px solid #4569a8;
  border-radius: 14px;
  color: #fff;
  font-size: 27px;

  select {
    flex: 1;
    min-width: 0;
    margin-left: 10px;
  }

  svg {
    color: #b4bccd;
  }
`;

const TeamBadge = styled.span`
  display: flex;
  align-items: center;
  justify-content: center;
  width: 48px;
  height: 48px;
  border-radius: 6px;
  background: #00e1ff;
  font-size: 21px;
  font-weight: 700;
`;

const Main = styled.main`
  display: flex;
  flex: 1;
  flex-direction: column;
  min-width: 0;
  background: #f6f6f6;
`;

const Header = styled.header`
  display: flex;
  align-items: center;
  height: 112px;
  padding: 0 32px 0 34px;
  background: #fff;
`;

const HeaderTitle = styled.h1`
  margin: 0 auto 0 20px;
  color: #000;
  font-size: 40px;
  font-weight: 500;
`;

const IconButton = styled.button`
  display: flex;
  align-items: center;
  justify-content: center;
`;

const CollapseButton = styled(IconButton)`
  justify-self: start;
`;

const WriteGroup = styled.div`
  display: flex;
  align-items: center;
  height: 70px;
  margin-left: 54px;
  border-radius: 10px;
  background: #000;
  color: #fff;
  box-shadow: 0 2px 6px rgba(0, 0, 0, 0.2);
`;

const WriteButton = styled.button`
  display: flex;
  align-items: center;
  gap: 20px;
  height: 100%;
  padding: 0 56px 0 28px;
  font-size: 27px;
  font-weight: 500;
`;

const WriteMore = styled.button`
  display: flex;
  align-items: center;
  justify-content: center;
  width: 64px;
  height: 42px;
  border-left: 2px solid #9aa0b4;
`;

const Workspace = styled.div`
  display: flex;
  flex: 1;
  min-height: 0;
`;

const Tabs = styled.nav`
  width: 128px;
  border-right: 2px solid #d4d7e2;
`;

const TabLink = styled.a`
  display: flex;
  flex-direction: column;
  align-items: center;
  gap: 12px;
  height: 128px;
  padding-top: 21px;
  background: ${(props) => (props.$active ? "#dedede" : "transparent")};
  color: #000;
  font-size: 19px;
  font-weight: 500;
`;

const Card = styled.section`
  display: flex;
  flex: 1;
  flex-direction: column;
  margin: 16px 16px 18px;
  border-radius: 12px;
  background: #e8af1e;
  overflow: hidden;
`;

const Player = styled.div`
  flex-shrink: 0;
  height: 420px;
  padding: 0 64px;
`;

const PlayerHeader = styled.div`
  display: grid;
  grid-template-columns: 1fr auto 1fr;
  align-items: center;
  height: 112px;
  margin: 0 -8px 0 -28px;
`;

const FileName = styled.h2`
  margin: 0;
  padding-left: 92px;
  color: #222;
  font-family: "Liberation Sans", Arial, sans-serif;
  font-size: 44px;
  font-weight: 700;
  text-align: center;
`;

const PlayerActions = styled.div`
  display: flex;
  align-items: center;
  justify-content: flex-end;
  gap: 40px;
`;

const Wave = styled.svg`
  width: 100%;
  height: 152px;
  margin-top: 12px;
`;

const Times = styled.div`
  display: flex;
  justify-content: space-between;
`;

const TimePill = styled.span`
  padding: 0 16px;
  border-radius: 18px;
  background: #5c4519;
  color: #fff;
  font-size: 25px;
  line-height: 36px;
`;

const Controls = styled.div`
  display: flex;
  align-items: center;
  justify-content: center;
  gap: 41px;
  padding-left: 6px;
  color: #000;
`;

const PlayButton = styled(IconButton)`
  border-radius: 50%;
  background: #000;
  color: #e8af1e;
`;

const SpeedButton = styled(IconButton)`
  width: 48px;
  height: 36px;
  border: 2px solid #000;
  border-radius: 8px;
  color: #222;
  font-size: 24px;
`;

const Transcript = styled.div`
  flex: 1;
  min-height: 0;
  padding: 44px 42px 0 40px;
  background: #dba71b;
  color: #222;
  overflow-y: auto;
  scrollbar-width: none;
`;

const TranscriptBar = styled.div`
  display: flex;
  align-items: center;
  gap: 34px;
`;

const PlainSelect = styled.div`
  display: flex;
  align-items: center;
  gap: 14px;
  margin-right: auto;
  font-size: 35px;
`;

const OutlinedSelect = styled(PlainSelect)`
  gap: 18px;
  height: 62px;
  margin-right: 0;
  padding: 0 24px 0 16px;
  border: 2px solid #3b3a34;
  border-radius: 10px;
  font-size: 27px;
`;

const Usage = styled.p`
  margin: 30px 0 0;
  color: #6b7280;
  font-size: 23px;
  line-height: 32px;
  text-align: center;
`;

const DocTitle = styled.h3`
  margin: 14px 0 0;
  font-size: 77px;
  font-weight: 400;
  line-height: 104px;
`;

const DocHeading = styled.h4`
  margin: 8px 0 0;
  font-size: 63px;
  font-weight: 400;
  line-height: 82px;
`;

const DocList = styled.ul`
  margin: 13px 0 28px;
  padding-left: 80px;
  font-size: 36px;
  line-height: 67px;
`;

const CardFooter = styled.footer`
  display: flex;
  flex-shrink: 0;
  align-items: center;
  justify-content: center;
  height: 87px;
  margin-top: 13px;
  padding-top: 10px;
  border-top: 2px solid #d09d1b;
  color: #54421a;
`;

const BottomBar = styled.footer`
  position: relative;
  display: flex;
  height: 56px;
  background: #fff;
  box-shadow: 0 -2px 20px rgba(0, 0, 0, 0.2);
`;

const ChatTabs = styled.div`
  display: flex;
  width: 520px;
  border-right: 3px solid #ececec;
`;

const ChatLink = styled.a`
  display: flex;
  flex: 1;
  flex-direction: column;
  align-items: center;
  justify-content: flex-end;
  color: #979bab;
  font-size: 16px;
  line-height: 20px;
`;

const ChatInput = styled.input`
  flex: 1;
  min-width: 0;
  padding: 0 22px;
  font-size: 23px;

  &::placeholder {
    color: #b0b4c6;
  }
`;

const Tools = styled.div`
  display: flex;
`;

const Tool = styled.button`
  position: relative;
  display: flex;
  align-items: center;
  justify-content: center;
  width: ${(props) => (props.$text ? 118 : 98)}px;
  border-top: 2px solid #c5c9de;
  border-left: 2px solid #c5c9de;
  color: #313949;
  font-size: 23px;
  font-weight: 600;
`;

const GradientTool = styled(Tool)`
  gap: ${(props) => (props.$wide ? 10 : 0)}px;
  width: ${(props) => (props.$wide ? 305 : 119)}px;
  padding-bottom: ${(props) => (props.$wide ? 6 : 0)}px;
  border-top-color: #fff;
  border-left: none;
  background: linear-gradient(100deg, #a372e8 25%, #7b75e6 55%) padding-box;
  color: #fff;
`;

const NotesTool = styled(Tool)`
  width: 60px;
  border-top-color: #fff;
  color: #6b7280;
`;

const Count = styled.span`
  position: absolute;
  top: -28px;
  right: 8px;
  width: 36px;
  height: 36px;
  border-radius: 50%;
  background: #ee3e4a;
  color: #fff;
  font-size: 26px;
  font-weight: 500;
  line-height: 36px;
`;

export default App;
